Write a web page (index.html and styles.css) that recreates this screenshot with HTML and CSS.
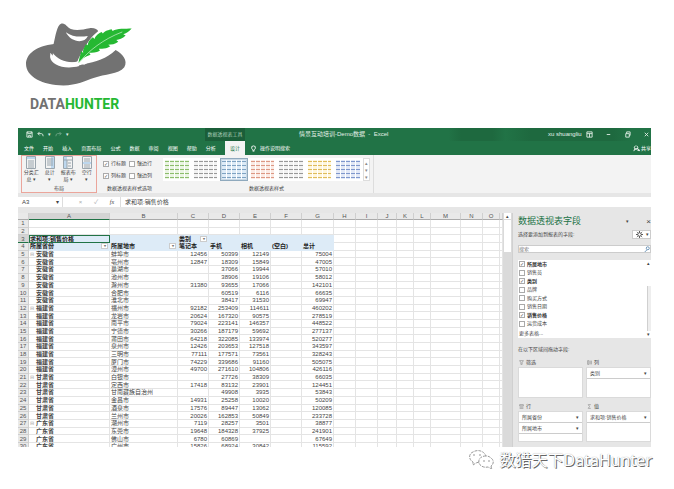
FILE: index.html
```html
<!DOCTYPE html>
<html lang="zh-CN">
<head>
<meta charset="utf-8">
<title>情景互动培训-Demo数据 - Excel</title>
<link rel="stylesheet" href="styles.css">
</head>
<body>
<header class="brand">
  <svg class="hat" viewBox="0 0 320 190" aria-hidden="true">
    <path fill="#727272" d="M84 62C30 68 0 92 0 122c0 38 50 64 112 64 40 0 66-14 90-22 34-12 74-10 92-32 12-20-6-42-26-52-26 26-60 36-96 42-30 12-66 8-94-12z"/>
    <path fill="#727272" d="M82 64C88 40 92 6 106 1c12-3 16 11 28 16 18 7 38 1 56-2 14-2 24 4 26 9-20 14-34 36-44 58l-16 32c-26 8-60-2-78-28z"/>
    <path fill="#fff" d="M73 88c14 20 40 32 82 29l4 11c-42 12-84-2-87-27zM119 27c20 14 42 15 66 11-10 24-50 20-66-11z"/>
    <path fill="#fff" d="M152 118C166 84 190 44 226 16h90l4 12c-14 40-62 58-102 72l-44 24z"/>
    <path fill="#25b832" d="M157 119c2-16 6-24 8-36l6 6c-2-12 6-20 8-27l6 4c0-12 10-20 15-24l5 5c3-12 14-17 21-21l4 5c6-9 18-11 26-13l3 5c14-8 38-6 57-7-8 9-14 14-25 17l7 4c-9 9-20 12-28 13l6 5c-10 8-20 8-30 9l6 5c-13 9-24 7-34 7l3 6c-12 6-22 6-32 6l4 6c-10 4-20 6-26 15z"/>
    <path d="M158 118C188 82 230 48 288 26" fill="none" stroke="#d5f3d6" stroke-width="2"/>
  </svg>
  <div class="wordmark">DATA<span>HUNTER</span></div>
</header>

<main class="app">
  <div class="titlebar">
    <div class="quick">
      <button aria-label="保存"><svg viewBox="0 0 8 8"><path d="M1 1h6v6H1zM2 1v2h4V1M3 7V5h2v2"/></svg></button>
      <button aria-label="撤消"><svg viewBox="0 0 8 8"><path d="M3 1L1 3l2 2M1 3h4q2 0 2 3"/></svg></button>
      <i>▾</i>
      <button class="dim" aria-label="恢复"><svg viewBox="0 0 8 8"><path d="M5 1l2 2-2 2M7 3H3Q1 3 1 6"/></svg></button>
      <i>▾</i>
    </div>
    <div class="context">数据透视表工具</div>
    <div class="doc">情景互动培训-Demo数据&nbsp; -&nbsp; Excel</div>
    <div class="account">xu shuangliu</div>
    <div class="controls">
      <button aria-label="功能区选项"><svg viewBox="0 0 8 8"><path d="M1 1h6v6H1zM1 3h6M4 3v4"/></svg></button>
      <button aria-label="最小化"><svg viewBox="0 0 8 8"><path d="M2 4h4"/></svg></button>
      <button aria-label="还原"><svg viewBox="0 0 8 8"><path d="M2 3h4v4H2zM3 3V1h4v4H6"/></svg></button>
      <button aria-label="关闭"><svg viewBox="0 0 8 8"><path d="M2 2l4 4M6 2L2 6"/></svg></button>
    </div>
  </div>

  <nav class="tabrow">
    <div class="tabs">
      <button>文件</button><button>开始</button><button>插入</button><button>页面布局</button><button>公式</button><button>数据</button><button>审阅</button><button>视图</button><button>帮助</button><button>分析</button><button class="active">设计</button>
    </div>
    <button class="tell"><svg viewBox="0 0 8 8"><path d="M3 6Q3 5 2 4Q1 1 4 1T6 4Q5 5 5 6zM3 7h2"/></svg>操作说明搜索</button>
    <button class="share"><svg viewBox="0 0 8 8"><path d="M4 1a2 2 0 1 1-1 0M1 7q0-3 3-3t3 3M5 6h3"/></svg>共享</button>
  </nav>

  <section class="ribbon">
    <div class="group layout">
      <div class="tools">
        <button><svg viewBox="0 0 10 13"><path class="fill" d="M1 1h8v2H1z"/><path d="M.5.5h9v12h-9zM2 5h6M2 7h6M2 9h6M2 11h6"/></svg><span>分类汇<br>总 ▾</span></button>
        <button><svg viewBox="0 0 10 13"><path class="fill" d="M6 1h3v11H6z"/><path d="M.5.5h9v12h-9zM2 3h6M2 5h6M2 7h6M2 9h6"/></svg><span>总计<br>▾</span></button>
        <button><svg viewBox="0 0 10 13"><path class="fill" d="M1 1h3v11H1z"/><path d="M.5.5h9v12h-9zM.5 4h9M4 4v8M5 7h3M5 10h3"/></svg><span>报表布<br>局 ▾</span></button>
        <button><svg viewBox="0 0 10 13"><path class="fill" d="M1 6h8v2H1z"/><path d="M.5.5h9v12h-9zM2 3h6M2 5h6M2 9h6M2 11h6"/></svg><span>空行<br>▾</span></button>
      </div>
      <h2>布局</h2>
    </div>
    <div class="group options">
      <div class="checks">
        <label><input type="checkbox" checked>行标题</label>
        <label><input type="checkbox">镶边行</label>
        <label><input type="checkbox" checked>列标题</label>
        <label><input type="checkbox">镶边列</label>
      </div>
      <h2>数据透视表样式选项</h2>
    </div>
    <div class="group gallery">
      <div class="thumbs">
        <button class="thumb green" aria-label="绿色样式"></button>
        <button class="thumb grey" aria-label="灰色样式"></button>
        <button class="thumb blue picked" aria-label="浅蓝样式"></button>
        <button class="thumb red" aria-label="橙色样式"></button>
        <button class="thumb grey" aria-label="浅灰样式"></button>
        <button class="thumb gold" aria-label="金色样式"></button>
        <button class="thumb navy" aria-label="蓝色样式"></button>
        <div class="scroll"><button>▴</button><button>▾</button><button>▾</button></div>
      </div>
      <h2>数据透视表样式</h2>
    </div>
  </section>

  <div class="formula">
    <div class="namebox"><span>A3</span><i>▾</i></div>
    <div class="fx"><i>×</i><i>✓</i><em>fx</em></div>
    <input aria-label="编辑栏" value="求和项:销售价格">
  </div>

  <div class="work">
    <div class="sheet">
      <table>
        <colgroup><col class="c-n"><col class="c-a"><col class="c-b"><col class="c-d"><col class="c-d"><col class="c-d"><col class="c-d"><col class="c-g"><col class="c-h"><col class="c-h"><col class="c-j"><col class="c-k"><col class="c-k"><col class="c-m"><col class="c-h"><col class="c-k"><col></colgroup>
        <thead><tr><th></th><th class="sel">A</th><th>B</th><th>C</th><th>D</th><th>E</th><th>F</th><th>G</th><th>H</th><th>I</th><th>J</th><th>K</th><th>L</th><th>M</th><th>N</th><th>O</th><th></th></tr></thead>
        <tbody id="rows"></tbody>
      </table>
    </div>
    <div class="vscroll"><button aria-label="向上">▴</button><div class="grip"></div></div>
    <aside class="panel">
      <div class="phead"><h1>数据透视表字段</h1><i>▾</i><button aria-label="关闭窗格">×</button></div>
      <div class="pick"><span>选择要添加到报表的字段:</span><button aria-label="工具"><svg viewBox="0 0 8 8"><circle cx="4" cy="4" r="2"/><path d="M4 0v2M4 6v2M0 4h2M6 4h2M1 1l1 1M6 6l1 1M1 7l1-1M6 2l1-1"/></svg>▾</button></div>
      <div class="search"><input aria-label="搜索" placeholder="搜索"><svg viewBox="0 0 8 8"><circle cx="5" cy="3" r="2"/><path d="M4 5L1 8"/></svg></div>
      <div class="fields">
        <div class="list">
          <label class="on"><input type="checkbox" checked>所属地市</label>
          <label><input type="checkbox">销售员</label>
          <label class="on"><input type="checkbox" checked>类别</label>
          <label><input type="checkbox">品牌</label>
          <label><input type="checkbox">购买方式</label>
          <label><input type="checkbox">销售日期</label>
          <label class="on"><input type="checkbox" checked>销售价格</label>
          <label><input type="checkbox">运货成本</label>
          <a href="#more">更多表格...</a>
        </div>
        <div class="fscroll"><i>▴</i><b></b><i>▾</i></div>
      </div>
      <p class="hint">在以下区域间拖动字段:</p>
      <div class="zones">
        <section><h3><svg viewBox="0 0 8 8"><path d="M1 1h6L5 4v3H3V4z"/></svg>筛选</h3><div class="zone"></div></section>
        <section><h3><svg viewBox="0 0 8 8"><path d="M1 1h2v6H1zM5 1v6M7 1v6"/></svg>列</h3><div class="zone"><button>类别<i>▾</i></button></div></section>
        <section><h3><svg viewBox="0 0 8 8"><path d="M1 1h6v2H1zM1 5h6M1 7h6"/></svg>行</h3><div class="zone"><button>所属省份<i>▾</i></button><button>所属地市<i>▾</i></button></div></section>
        <section><h3><svg viewBox="0 0 8 8"><path d="M6 1H2l2 3-2 3h4"/></svg>值</h3><div class="zone"><button>求和项:销售价格<i>▾</i></button></div></section>
      </div>
    </aside>
  </div>
</main>

<footer class="mark">
  <svg viewBox="0 0 28 20" aria-hidden="true">
    <path d="M11 13l-3 1-3 2v-3C1 11 0 5 5 3c5-3 11-1 13 4"/>
    <path d="M18 7c-5 0-8 3-7 7 1 3 5 5 9 4l4 2-1-3c3-2 3-6 0-8q-2-2-5-2z"/>
    <path d="M6 5v2M12 5v2M16 11v2M21 11v2"/>
  </svg>
  <span>数猎天下DataHunter</span>
</footer>
<script src="sheet.js"></script>
</body>
</html>
```
FILE: styles.css
```css
* { box-sizing: border-box; }
body {
  margin: 0;
  min-height: 100vh;
  display: flex;
  flex-direction: column;
  background: #fff;
  color: #444;
  font: 5px/7px "Liberation Sans", "Noto Sans CJK SC", sans-serif;
}
button, input { margin: 0; padding: 0; border: 0; background: none; font: inherit; color: inherit; }
h1, h2, h3, p { margin: 0; font-weight: normal; font-size: inherit; }
i { font-style: normal; }
svg { fill: none; stroke: currentColor; stroke-width: 1; flex: none; }
button svg, h3 svg { width: 7px; height: 7px; }

.brand { height: 128px; padding: 23px 26px 0; }
.hat { display: block; width: 107px; height: 64px; stroke: none; }
.wordmark { margin: 7px 0 0 4px; font: bold 14px/20px Roboto, sans-serif; color: #727272; }
.wordmark span { color: #25b832; }

.app { flex: 1; margin: 0 23px 0 18px; display: flex; flex-direction: column; background: #e6e6e6; }

.titlebar {
  display: flex; align-items: center; height: 13px; color: #e4f0e8;
  background: linear-gradient(90deg, transparent 68%, #1e693f 70%, #1e693f 75%, transparent 77%, #1e693f 81%, #1e693f 94%, #217346 97%) #217346;
}
.quick { display: flex; align-items: center; gap: 4px; width: 187px; padding-left: 8px; }
.quick svg, .controls svg { display: block; }
.quick .dim { opacity: .4; }
.context { width: 40px; line-height: 13px; text-align: center; background: #1b5e39; color: #a9cdb7; }
.doc { flex: 1; padding-left: 54px; font-size: 6px; white-space: nowrap; }
.account { width: 38px; font-size: 6px; white-space: nowrap; }
.controls { display: flex; gap: 12px; width: 65px; }

.tabrow { display: flex; height: 14px; background: #217346; color: #fff; }
.tabs { display: flex; justify-content: space-between; width: 227px; padding-left: 6px; }
.tabs .active { padding: 0 5px; background: #f3f3f3; color: #217346; }
.tell { display: flex; align-items: center; gap: 3px; padding-left: 5px; }
.share { display: flex; align-items: center; gap: 1px; margin-left: auto; }

.ribbon { display: flex; height: 38px; background: #f3f3f3; }
.group { display: flex; flex-direction: column; justify-content: space-between; padding-bottom: 1px; }
.group h2 { text-align: center; }
.layout { margin-left: 3px; width: 76px; border: 1px solid #eba59b; padding-bottom: 0; }
.tools { display: grid; grid-template-columns: repeat(4, 1fr); }
.tools button { display: flex; flex-direction: column; align-items: center; white-space: nowrap; }
.tools svg { width: 10px; height: 13px; color: #9aa5ad; }
.fill { fill: #bdd7ee; stroke: none; }
.options { width: 65px; padding-top: 5px; }
.checks { display: grid; grid-template-columns: 26px 26px; row-gap: 5px; padding-left: 6px; }
label { display: flex; align-items: center; gap: 2px; white-space: nowrap; }
input[type="checkbox"] { appearance: none; width: 6px; height: 6px; border: 1px solid #aaa; background: #fff; flex: none; display: grid; place-items: center; }
input[type="checkbox"]:checked::after { content: "✓"; font: 5px/5px "DejaVu Sans", sans-serif; color: #555; }
.gallery { width: 212px; padding: 3px 3px 1px 1px; border-right: 1px solid #ddd; }
.thumbs { display: flex; gap: 1px; background: #fff; }
.thumb {
  --c: #999; --t: #f2f2f2;
  flex: 1; height: 23px; padding: 1px; border: 1px solid #fff;
  background:
    repeating-linear-gradient(90deg, transparent 0 4px, #fff 4px 5px) content-box,
    repeating-linear-gradient(var(--t) 0 1px, var(--c) 1px 2px, var(--t) 2px 4px) content-box;
}
.thumb.green { --c: #8dbd6c; --t: #eaf4e2; }
.thumb.blue { --c: #7fa3c2; --t: #ddebf7; }
.thumb.red { --c: #dc9884; --t: #fbeae4; }
.thumb.gold { --c: #dfbc5c; --t: #fff6dc; }
.thumb.navy { --c: #7f97cc; --t: #e2e8f6; }
.thumb.picked { border: 1px solid #8fa9bd; outline: 1px solid #c9d8e4; outline-offset: -2px; }
.scroll { display: flex; flex-direction: column; width: 7px; border: 1px solid #ddd; color: #888; }
.scroll button { flex: 1; line-height: 6px; }

.formula { display: flex; height: 10px; margin-top: 4px; background: #fff; font-size: 6px; line-height: 10px; }
.namebox { display: flex; justify-content: space-between; width: 44px; padding: 0 3px 0 4px; }
.fx { display: flex; justify-content: space-around; width: 59px; padding-left: 10px; margin-right: 4px; border-left: 1px solid #ddd; border-right: 1px solid #ddd; color: #aaa; }
.fx em { color: #444; font-family: "Liberation Serif", serif; }
.formula input { flex: 1; min-width: 0; }

.work { flex: 1; display: flex; min-height: 0; padding-top: 6px; }
.sheet { flex: 1; min-width: 0; height: 234px; overflow: hidden; }
table { width: 100%; height: 238px; table-layout: fixed; border-collapse: separate; border-spacing: 0; font-size: 6px; line-height: 6px; }
.c-n { width: 11px; } .c-a { width: 81px; } .c-b { width: 68px; } .c-d { width: 31px; } .c-g { width: 32px; }
.c-h { width: 22px; } .c-j { width: 19px; } .c-k { width: 17px; } .c-m { width: 30px; }
th, td { padding: 0 1px; white-space: nowrap; overflow: visible; }
th { font-weight: normal; background: #e9e9e9; border-right: 1px solid #cfcfcf; border-bottom: 1px solid #cfcfcf; color: #555; }
thead th { border-bottom-color: #aaa; }
th.sel { background: #d4d4d4; border-bottom-color: #217346; }
td { background: #fff; border-right: 1px solid #e4e4e4; border-bottom: 1px solid #e4e4e4; }
td.num { text-align: right; }
td.prov { font-weight: bold; padding-left: 7px; }
td.first { padding-left: 1px; }
td.first::before { content: "⊟"; display: inline-block; width: 6px; color: #aaa; font-weight: normal; font-size: 5px; }
tr.head td.piv { background: #ddebf7; border-color: #ddebf7; font-weight: bold; color: #222; }
tr.head td.cursor { outline: 1px solid #217346; outline-offset: -1px; }
td button { float: right; width: 7px; height: 6px; background: #fff; border: 1px solid #ccc; font-size: 4px; line-height: 4px; color: #777; }

.vscroll { width: 9px; padding: 0 1px; background: #dadada; }
.vscroll button { display: block; width: 7px; height: 6px; background: #fff; line-height: 6px; }
.grip { height: 32px; margin-top: 1px; background: #fff; }

.panel { width: 139px; padding-left: 5px; border-left: 1px solid #d0d0d0; }
.phead { display: flex; align-items: center; height: 17px; }
.phead h1 { flex: 1; font-size: 9px; line-height: 17px; color: #217346; }
.phead button { width: 14px; margin-left: 8px; text-align: right; font-size: 8px; }
.pick { display: flex; justify-content: space-between; align-items: center; }
.pick button { display: flex; align-items: center; gap: 3px; height: 9px; padding: 0 1px 0 3px; background: #fff; border: 1px solid #ccc; }
.search { display: flex; align-items: center; height: 8px; margin-top: 6px; background: #fff; border: 1px solid #ccc; }
.search input { flex: 1; min-width: 0; height: 6px; }
.search svg { width: 6px; height: 6px; color: #4a7ba6; }
.fields { display: flex; height: 78px; margin-top: 7px; background: #fff; }
.list { flex: 1; display: flex; flex-direction: column; padding-left: 1px; }
.list label { flex: 1; }
.list .on { font-weight: bold; color: #333; }
.list a { line-height: 10px; color: inherit; text-decoration: none; }
.fscroll { display: flex; flex-direction: column; width: 4px; }
.fscroll b { flex: 1; margin: 19px 0 0; border-left: 1px solid #d0d0d0; background: #eee; }
.hint { margin-top: 8px; }
.zones { display: grid; grid-template-columns: 1fr 1fr; gap: 4px 3px; margin-top: 5px; }
.zones h3 { display: flex; align-items: center; gap: 2px; height: 9px; padding-left: 1px; }
.zones h3 svg { width: 5px; height: 5px; color: #888; }
.zone { height: 31px; background: #fff; border: 1px solid #dadada; }
.zone button { display: flex; justify-content: space-between; width: 100%; padding: 1px 3px; line-height: 8px; border-bottom: 1px solid #ccc; }

.mark { display: flex; align-items: flex-start; justify-content: flex-end; gap: 4px; height: 42px; padding: 2px 22px 0 0; color: #fff; font: 16px/22px "Noto Sans", "Noto Sans CJK SC", sans-serif; text-shadow: 1px 1px 0 #666, 0 0 1px #999; }
.mark svg { width: 28px; height: 20px; stroke: #999; stroke-dasharray: 3 1; }
```
FILE: sheet.js
```js
const data = [
  ["安徽省", "蚌埠市", 12456, 50399, 12149, 75004], ["安徽省", "亳州市", 12847, 18309, 15849, 47005],
  ["安徽省", "巢湖市", "", 37066, 19944, 57010], ["安徽省", "池州市", "", 38906, 19106, 58012],
  ["安徽省", "滁州市", 31380, 93655, 17066, 142101], ["安徽省", "合肥市", "", 60519, 6116, 66635],
  ["安徽省", "淮北市", "", 38417, 31530, 69947], ["福建省", "福州市", 92182, 253409, 114611, 460202],
  ["福建省", "龙岩市", 20624, 167320, 90575, 278519], ["福建省", "南平市", 79024, 223141, 146357, 448522],
  ["福建省", "宁德市", 30266, 187179, 59692, 277137], ["福建省", "莆田市", 64218, 322085, 133974, 520277],
  ["福建省", "泉州市", 12426, 203653, 127518, 343597], ["福建省", "三明市", 77111, 177571, 73561, 328243],
  ["福建省", "厦门市", 74229, 339686, 91160, 505075], ["福建省", "漳州市", 49700, 271610, 104806, 426116],
  ["甘肃省", "白银市", "", 27726, 38309, 66035], ["甘肃省", "定西市", 17418, 83132, 23901, 124451],
  ["甘肃省", "甘南藏族自治州", "", 49908, 3935, 53843], ["甘肃省", "金昌市", 14931, 25258, 10020, 50209],
  ["甘肃省", "酒泉市", 17576, 89447, 13062, 120085], ["甘肃省", "兰州市", 20026, 162853, 50849, 233728],
  ["广东省", "潮州市", 7119, 28257, 3501, 38877], ["广东省", "东莞市", 19648, 184328, 37925, 241901],
  ["广东省", "佛山市", 6780, 60869, "", 67649], ["广东省", "广州市", 15826, 68924, 30842, 115592]
];
const drop = "<button aria-label='筛选'>▾</button>";
const blank = "<td></td>";
const piv = (text, cls = "") => `<td class="piv ${cls}">${text}</td>`;
const rows = [
  "<tr><th>1</th>" + blank.repeat(16) + "</tr>",
  "<tr><th>2</th>" + blank.repeat(16) + "</tr>",
  "<tr class='head'><th class='sel'>3</th>" + piv("求和项:销售价格", "cursor") + piv("") + piv(drop + "类别") + piv("").repeat(4) + blank.repeat(9) + "</tr>",
  "<tr class='head'><th>4</th>" + piv(drop + "所属省份") + piv(drop + "所属地市") + ["笔记本", "手机", "相机", "(空白)", "总计"].map(t => piv(t)).join("") + blank.repeat(9) + "</tr>"
];
data.forEach(([prov, city, c, d, e, total], i) => {
  const first = i === 0 || data[i - 1][0] !== prov;
  const nums = [c, d, e, "", total].map(n => `<td class="num">${n}</td>`).join("");
  rows.push(`<tr><th>${i + 5}</th><td class="prov ${first ? "first" : ""}">${prov}</td><td>${city}</td>${nums}${blank.repeat(9)}</tr>`);
});
document.getElementById("rows").innerHTML = rows.join("");
```
